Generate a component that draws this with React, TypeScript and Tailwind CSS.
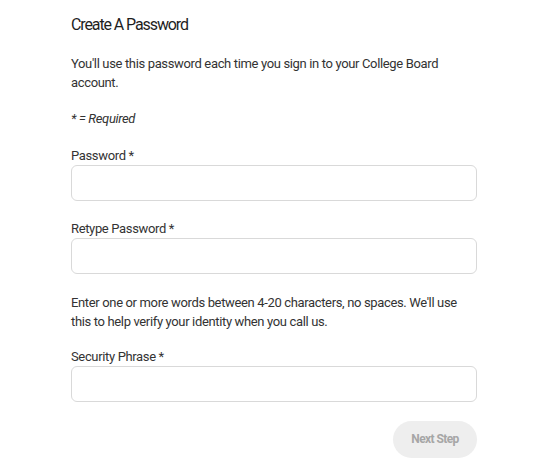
export default function App() {
  return (
    <div className="min-h-[464px] w-[541px] bg-white">
      <div className="ml-[71px] w-[406px] pt-[12px] font-['Roboto',_'Liberation_Sans',_sans-serif] text-[13px] leading-[19px] tracking-[-0.35px] text-[#333333]">
        <h1 className="pt-[1px] text-[16px] leading-[24px] tracking-[-1.1px] text-[#1e1e1e]">Create A Password</h1>
        <p className="mt-[17px] max-w-[395px]">
          You'll use this password each time you sign in to your College Board account.
        </p>
        <p className="mt-[17px] italic">* = Required</p>

        <label className="mt-[18px] block">Password *</label>
        <input type="password" className="block h-[36px] w-full rounded-[6px] border border-[#d9d9d9] outline-none" />

        <label className="mt-[18px] block">Retype Password *</label>
        <input type="password" className="block h-[36px] w-full rounded-[6px] border border-[#d9d9d9] outline-none" />

        <p className="mt-[19px] max-w-[395px]">
          Enter one or more words between 4-20 characters, no spaces. We'll use this to help verify your identity when you call us.
        </p>

        <label className="mt-[16px] block">Security Phrase *</label>
        <input type="text" className="block h-[36px] w-full rounded-[6px] border border-[#d9d9d9] outline-none" />

        <div className="mt-[19px] flex justify-end">
          <button className="h-[37px] w-[84px] rounded-full bg-[#eeeeee] text-[12px] font-bold tracking-[-0.6px] text-[#a6a6a6]">
            Next Step
          </button>
        </div>
      </div>
    </div>
  );
}
